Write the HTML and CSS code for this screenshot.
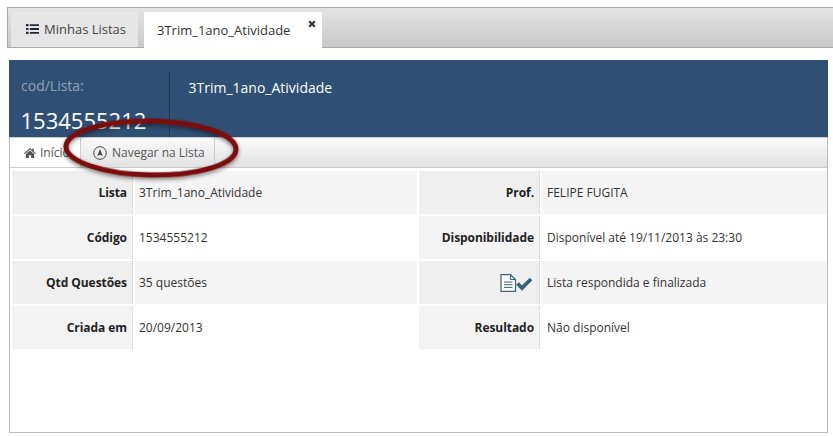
FILE: index.html
```html
<!DOCTYPE html>
<html lang="pt">
<head>
<meta charset="utf-8">
<title>3Trim_1ano_Atividade</title>
<link rel="stylesheet" href="styles.css">
</head>
<body>
<nav class="tabbar">
  <a class="tab tab-list">
    <svg class="icon-list" viewBox="0 0 13 10" width="13" height="10"><path d="M0 0h2.5v2.2H0zM0 3.9h2.5v2.2H0zM0 7.8h2.5V10H0zM3.8 .2H13v1.8H3.8zM3.8 4.1H13v1.8H3.8zM3.8 8H13v1.8H3.8z" fill="#1f2a36"/></svg>
    <span>Minhas Listas</span>
  </a>
  <a class="tab tab-active">
    <span>3Trim_1ano_Atividade</span>
    <svg class="icon-close" viewBox="0 0 8 8" width="8" height="8"><path d="M1.2 1.2l5.6 5.6M6.8 1.2L1.2 6.8" stroke="#333" stroke-width="2.1"/></svg>
  </a>
</nav>
<main class="panel">
  <header class="banner">
    <div class="code-box">
      <div class="code-label">cod/Lista:</div>
      <div class="code-value">1534555212</div>
    </div>
    <div class="banner-title">3Trim_1ano_Atividade</div>
  </header>
  <div class="toolbar">
    <a class="tool tool-home">
      <svg viewBox="0 0 12 10" width="12" height="10"><path d="M6 0L0 5.2l.7.8L6 1.5 11.3 6l.7-.8L9.8 3.3V.6H8.3v1.4zM1.8 6v4h3V7.2h2.4V10h3V6L6 2.4z" fill="#555"/></svg>
      <span>Início</span>
    </a>
    <a class="tool tool-nav">
      <svg viewBox="0 0 14 14" width="14" height="14"><circle cx="7" cy="7" r="6.3" fill="none" stroke="#444" stroke-width="1"/><path d="M7 3L4.3 10 7 8.7 9.7 10z" fill="#444"/></svg>
      <span>Navegar na Lista</span>
    </a>
  </div>
  <div class="details">
    <div class="row">
      <div class="label">Lista</div><div class="value">3Trim_1ano_Atividade</div>
      <div class="label">Prof.</div><div class="value">FELIPE FUGITA</div>
    </div>
    <div class="row">
      <div class="label">Código</div><div class="value">1534555212</div>
      <div class="label">Disponibilidade</div><div class="value">Disponível até 19/11/2013 às 23:30</div>
    </div>
    <div class="row">
      <div class="label">Qtd Questões</div><div class="value">35 questões</div>
      <div class="label">
        <svg class="icon-done" viewBox="0 0 33 18" width="33" height="18"><path d="M1 .7h9.5L15.5 5.5v11.8H1z" fill="#fff" stroke="#3d6178" stroke-width="1.2"/><path d="M10.5 .7v4.8h5" fill="none" stroke="#3d6178" stroke-width="1"/><path d="M4 8h8.5M4 10.7h8.500M4 13.4h8.5" stroke="#3d6178" stroke-width="1"/><path d="M17.500 9.500l4.500 4.500 9-9" fill="none" stroke="#3d6178" stroke-width="3.800"/></svg>
      </div>
      <div class="value">Lista respondida e finalizada</div>
    </div>
    <div class="row">
      <div class="label">Criada em</div><div class="value">20/09/2013</div>
      <div class="label">Resultado</div><div class="value">Não disponível</div>
    </div>
  </div>
</main>
<svg class="highlight" viewBox="0 0 190 74" width="190" height="74">
  <defs><filter id="s" x="-10%" y="-20%" width="120%" height="140%"><feDropShadow dx="0" dy="2" stdDeviation="2" flood-color="#000" flood-opacity=".5"/></filter></defs>
  <ellipse cx="94" cy="32" rx="85" ry="27" transform="rotate(1 94 32)" fill="none" stroke="#7a0b0b" stroke-width="5" filter="url(#s)"/>
</svg>
</body>
</html>
```
FILE: styles.css
```css
* { box-sizing: border-box; }
html, body { margin: 0; height: 100%; background: #fff; }
body {
  position: relative;
  width: 833px;
  height: 436px;
  overflow: hidden;
  padding: 7px 0 0 7px;
  font-family: "Open Sans", sans-serif;
  font-size: 12px;
  color: #333;
}
.tabbar {
  display: flex;
  align-items: flex-end;
  height: 41px;
  padding: 0 0 0 3px;
  gap: 6px;
  border-top: 1px solid #aaa;
  border-bottom: 1px solid #aaa;
  border-left: 1px solid #aaa;
  background: linear-gradient(#e4e4e4, #c9c9c9);
}
.tab {
  display: flex;
  align-items: center;
  height: 35px;
  font-size: 13px;
}
.tab-list {
  width: 127px;
  height: 35px;
  margin-bottom: 0;
  padding: 0 0 2px 15px;
  gap: 5px;
  background: #e6e6e6;
  color: #444;
}
.tab-active {
  position: relative;
  width: 178px;
  height: 36px;
  margin-bottom: -1px;
  padding: 0 0 0 13px;
  background: #fff;
  color: #333;
}
.icon-close { position: absolute; top: 8px; right: 6px; }
.panel {
  width: 819px;
  height: 373px;
  margin: 12px 0 0 2px;
  border: 1px solid #bbb;
  border-top: 0;
  display: flex;
  flex-direction: column;
}
.banner {
  display: flex;
  height: 77px;
  margin: 0 -1px;
  background: #2f4f75;
  color: #fff;
}
.code-box {
  width: 160px;
  padding: 17px 0 0 12px;
  overflow: hidden;
}
.code-label { font-size: 14px; line-height: 18px; color: #8fa3b8; }
.code-value { margin-top: 10px; margin-left: -0.5px; font-size: 22px; line-height: 30px; white-space: nowrap; }
.banner-title {
  height: 65px;
  margin-top: 12px;
  padding: 6px 0 0 18.5px;
  border-left: 1px solid #1f3957;
  font-size: 14px;
  line-height: 20px;
}
.toolbar {
  display: flex;
  height: 31px;
  padding-top: 0;
  border-top: 1px solid #ccc;
  border-bottom: 1px solid #ccc;
  background: linear-gradient(#fafafa, #e2e2e2);
}
.tool {
  display: flex;
  align-items: center;
  gap: 5px;
  height: 29px;
  font-size: 12px;
  color: #555;
}
.tool-home {
  width: 71px;
  padding-left: 14px;
  gap: 4px;
  background: #fff;
  border-right: 1px solid #ccc;
}
.tool-nav {
  width: 134px;
  padding-left: 12px;
  border-right: 1px solid #ccc;
  gap: 5px;
}
.details {
  display: flex;
  flex-direction: column;
  gap: 2px;
  padding: 3px 2px 0;
}
.row {
  display: grid;
  grid-template-columns: 121px 282px 121px 285px;
  gap: 0 2px;
  height: 43px;
}
.label {
  display: flex;
  align-items: center;
  justify-content: flex-end;
  padding-right: 5px;
  font-weight: 700;
  letter-spacing: -0.06px;
  color: #222;
  background: #f3f3f3;
  border-right: 1px dotted #ccc;
}
.row:nth-child(odd) .label { background: #efefef; }
.icon-done { margin-right: 1px; }
.value {
  display: flex;
  align-items: center;
  padding-left: 4px;
  color: #333;
}
.value:last-child { padding-left: 5px; }
.row:nth-child(odd) .value { background: #f4f4f4; }
.highlight {
  position: absolute;
  left: 57px;
  top: 116px;
}
```
